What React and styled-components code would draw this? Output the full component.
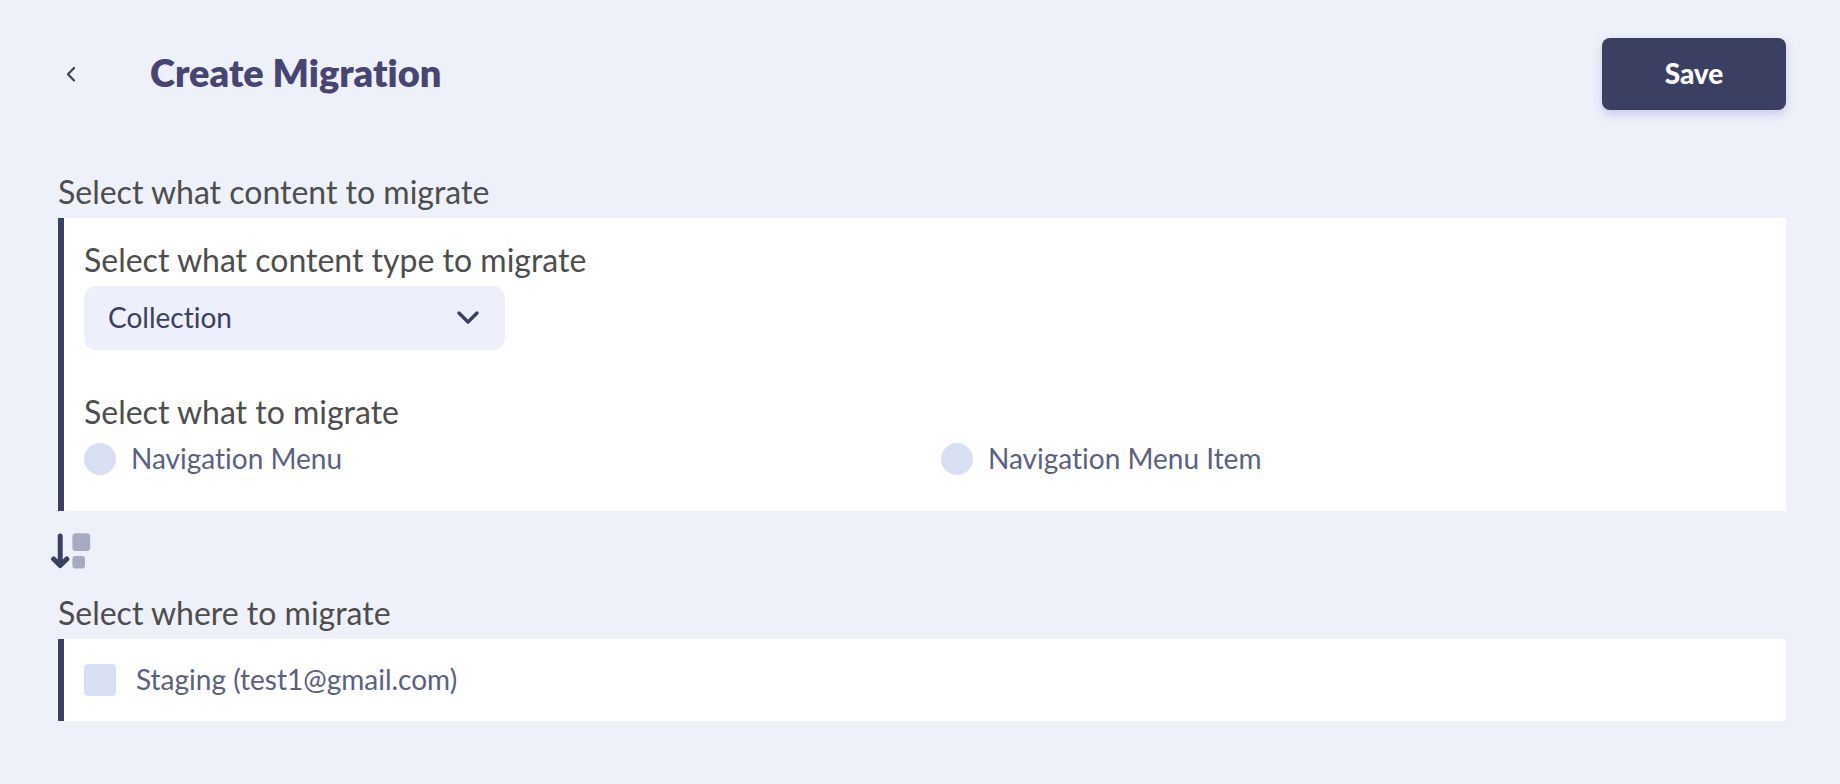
import React from "react";
import styled, { createGlobalStyle } from "styled-components";

const GlobalStyle = createGlobalStyle`
  *, *::before, *::after { box-sizing: border-box; }
  body {
    margin: 0;
    background: #eef1f9;
    font-family: Lato, "Liberation Sans", sans-serif;
    font-variant-ligatures: none;
  }
`;

const Page = styled.main`
  min-height: 100vh;
  padding: 38px 54px 62px 58px;
`;

const Header = styled.header`
  display: flex;
  align-items: center;
  margin-bottom: 60px;
`;

const BackButton = styled.button`
  display: grid;
  place-items: center;
  width: 26px;
  height: 32px;
  margin-right: 66px;
  padding: 0;
  border: 0;
  background: none;
  color: #3b4062;
  cursor: pointer;
`;

const Title = styled.h1`
  flex: 1;
  margin: 0;
  padding-bottom: 4px;
  color: #474572;
  font-size: 38px;
  font-weight: 800;
  line-height: 46px;
`;

const SaveButton = styled.button`
  width: 184px;
  height: 72px;
  padding: 0 0 2px;
  border: 0;
  border-radius: 8px;
  background: #3b4062;
  box-shadow: 0 4px 10px rgba(90, 80, 190, 0.25);
  color: #fff;
  font-family: inherit;
  font-size: 28px;
  font-weight: 900;
  cursor: pointer;
`;

const Heading = styled.h2`
  margin: 0 0 4px;
  color: #4d4d4d;
  font-size: 32px;
  font-weight: 400;
  line-height: 44px;
`;

const FieldLabel = styled(Heading).attrs({ as: "label" })`
  display: block;
`;

const Panel = styled.div`
  padding: 20px 20px ${(p) => p.$bottom}px;
  border-left: 6px solid #3b4062;
  background: #fff;
`;

const Group = styled.fieldset`
  min-width: 0;
  margin: 40px 0 0;
  padding: 0;
  border: 0;
`;

const Legend = styled(Heading).attrs({ as: "legend" })`
  padding: 0;
`;

const SelectBox = styled.div`
  display: grid;
  align-items: center;
  width: 421px;
  max-width: 100%;
  > * { grid-area: 1 / 1; }
  > svg {
    justify-self: end;
    margin-right: 25px;
    pointer-events: none;
  }
`;

const Select = styled.select`
  appearance: none;
  width: 100%;
  height: 64px;
  padding: 0 64px 2px 24px;
  border: 0;
  border-radius: 12px;
  background: #edeffb;
  color: #3b4062;
  font-family: inherit;
  font-size: 28px;
  font-variant-ligatures: none;
  cursor: pointer;
`;

const Options = styled.div`
  display: grid;
  grid-template-columns: repeat(${(p) => p.$columns}, 1fr);
  column-gap: 32px;
`;

const Option = styled.label`
  display: flex;
  align-items: center;
  gap: ${(p) => p.$gap}px;
  height: 42px;
  cursor: pointer;
`;

const OptionText = styled.span`
  padding-bottom: 2px;
  color: #5b6082;
  font-size: 28px;
  line-height: 34px;
`;

const Tick = styled.input`
  appearance: none;
  flex: none;
  width: 32px;
  height: 32px;
  margin: 0;
  border-radius: ${(p) => (p.type === "radio" ? "50%" : "4px")};
  background: #d8dff3;
  cursor: pointer;
  &:checked { background: #3b4062; }
`;

const Flow = styled.div`
  display: flex;
  margin-left: -8px;
  padding: 22px 0;
`;

function BackIcon() {
  return (
    <svg width="12" height="18" viewBox="0 0 12 18" fill="none" stroke="currentColor" strokeWidth="2.2" strokeLinecap="round" strokeLinejoin="round" aria-hidden="true">
      <path d="M9 3 3 9.2l6 6.2" />
    </svg>
  );
}

function ChevronIcon() {
  return (
    <svg width="24" height="16" viewBox="0 0 24 16" fill="none" stroke="#3b4062" strokeWidth="3.4" strokeLinecap="round" strokeLinejoin="round" aria-hidden="true">
      <path d="m3 3 9 9 9-9" />
    </svg>
  );
}

function FlowIcon() {
  return (
    <svg width="41" height="36" viewBox="0 0 41 36" fill="none" aria-hidden="true">
      <rect x="22.4" y="0.3" width="17.8" height="17.8" rx="3.5" fill="#a7abc0" />
      <rect x="22.4" y="23" width="12.6" height="12.6" rx="3" fill="#a7abc0" />
      <path d="M10.2 3v29M3.6 26l6.6 6.6 6.6-6.6" stroke="#3b4062" strokeWidth="5" strokeLinecap="round" strokeLinejoin="round" />
    </svg>
  );
}

function Choice({ type, name, gap, children }) {
  return (
    <Option $gap={gap}>
      <Tick type={type} name={name} value={children} />
      <OptionText>{children}</OptionText>
    </Option>
  );
}

export default function App() {
  return (
    <>
      <GlobalStyle />
      <Page>
        <Header>
          <BackButton type="button" aria-label="Back">
            <BackIcon />
          </BackButton>
          <Title>Create Migration</Title>
          <SaveButton type="button">Save</SaveButton>
        </Header>

        <section>
          <Heading>Select what content to migrate</Heading>
          <Panel $bottom={31}>
            <FieldLabel htmlFor="content-type">Select what content type to migrate</FieldLabel>
            <SelectBox>
              <Select id="content-type" defaultValue="Collection">
                <option>Collection</option>
              </Select>
              <ChevronIcon />
            </SelectBox>
            <Group>
              <Legend>Select what to migrate</Legend>
              <Options $columns={2}>
                <Choice type="radio" name="item" gap={15}>Navigation Menu</Choice>
                <Choice type="radio" name="item" gap={15}>Navigation Menu Item</Choice>
              </Options>
            </Group>
          </Panel>
        </section>

        <Flow>
          <FlowIcon />
        </Flow>

        <section>
          <Heading>Select where to migrate</Heading>
          <Panel $bottom={20}>
            <Options $columns={1}>
              <Choice type="checkbox" name="target" gap={20}>Staging (test1@gmail.com)</Choice>
            </Options>
          </Panel>
        </section>
      </Page>
    </>
  );
}
